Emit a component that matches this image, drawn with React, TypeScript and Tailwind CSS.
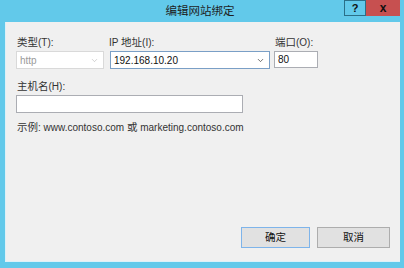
import { ChevronDown } from 'lucide-react';

const font = "font-['Liberation_Sans','Noto_Sans_CJK_SC',sans-serif]";

// latin glyphs in the shot are smaller than the CJK ones, so split runs
function T({ s }: { s: string }) {
   const parts = s.split(/([\u3000-\u9fff\uff00-\uffef]+)/).filter(Boolean);
   return (
      <>
         {parts.map((p, i) =>
            /[\u3000-\u9fff\uff00-\uffef]/.test(p)
               ? <span key={i} className="text-[10.5px]">{p}</span>
               : <span key={i} className="text-[10px]">{p}</span>
         )}
      </>
   );
}

function Label({ s }: { s: string }) {
   return <div className="h-[16px] leading-[16px] pl-[1px] whitespace-nowrap text-[#333333]"><T s={s} /></div>;
}

export default function App() {
   return (
      <div className={`w-[404px] h-[268px] bg-[#62c9ea] flex flex-col ${font}`}>
         {/* title bar */}
         <div className="h-[22px] flex items-start">
            <div className="flex-1 pl-[56px] text-center text-[11.5px] leading-[23px] text-[#1e1e1e]">编辑网站绑定</div>
            <div className="flex">
               <div className="w-[22px] h-[16px] bg-[#62c9ea] border border-[#2a6f88] flex items-center justify-center text-[11px] font-bold text-[#111] leading-none">?</div>
               <div className="w-[34px] h-[16px] bg-[#c75050] flex items-center justify-center text-[12px] font-bold text-[#111] leading-none">x</div>
            </div>
            <div className="w-[4px]" />
         </div>

         {/* client area */}
         <div className="ml-[5px] mr-[4px] h-[240px] bg-[#f0f0f0] border-l border-b border-[#dcf1f8] flex flex-col pl-[10px] pt-[11px]">
            <div className="flex items-start">
               <div className="w-[88px] flex flex-col gap-[2px]">
                  <Label s="类型(T):" />
                  <div className="h-[18px] border border-[#d9d9d9] bg-white flex items-center justify-between pl-[3px] pr-[4px] text-[10px] text-[#9a9a9a]">
                     <span>http</span>
                     <ChevronDown size={9} strokeWidth={1.5} className="text-[#b0b0b0]" />
                  </div>
               </div>
               <div className="w-[160px] ml-[6px] flex flex-col gap-[2px]">
                  <div className="-ml-[2px]"><Label s="IP 地址(I):" /></div>
                  <div className="h-[18px] border border-[#7a9fc6] bg-white flex items-center justify-between pl-[3px] pr-[4px] text-[10px] text-[#111]">
                     <span>192.168.10.20</span>
                     <ChevronDown size={9} strokeWidth={2} className="text-[#444]" />
                  </div>
               </div>
               <div className="w-[44px] ml-[4px] flex flex-col gap-[2px]">
                  <Label s="端口(O):" />
                  <div className="h-[17px] border border-[#abadb3] bg-white flex items-center pl-[3px] text-[10px] text-[#111]">80</div>
               </div>
            </div>

            <div className="mt-[8px] w-[227px] flex flex-col gap-[2px]">
               <Label s="主机名(H):" />
               <div className="h-[18px] border border-[#abadb3] bg-white" />
            </div>

            <div className="mt-[5px] pl-[1px] leading-[16px] text-[#333333]"><T s="示例: www.contoso.com 或 marketing.contoso.com" /></div>

            <div className="mt-auto mb-[13px] flex justify-end gap-[7px] pr-[10px]">
               <div className="w-[69px] h-[21px] border border-[#7eb4ea] bg-[#e1e1e1] flex items-center justify-center text-[10.5px] text-[#111]">确定</div>
               <div className="w-[73px] h-[21px] border border-[#adadad] bg-[#e1e1e1] flex items-center justify-center text-[10.5px] text-[#111]">取消</div>
            </div>
         </div>
      </div>
   );
}
